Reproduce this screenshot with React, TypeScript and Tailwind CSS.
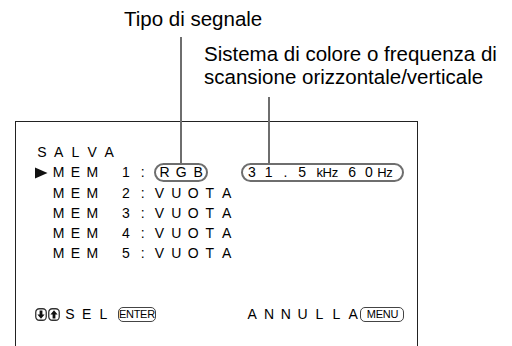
import React from "react";

function Cells({ text }: { text: string }) {
  return (
    <>
      {text.split("").map((c, i) => (
        <span key={i} className="inline-block w-[16.8px] text-center">
          {c === " " ? "\u00a0" : c}
        </span>
      ))}
    </>
  );
}

function KeyBox({ label, className }: { label: string; className?: string }) {
  return (
    <span
      className={`inline-flex items-center justify-center h-[15px] rounded-[5px] border-[1.5px] border-[#444] px-[2px] text-[11px] leading-none tracking-[-0.3px] font-['Liberation_Sans_Narrow','Liberation_Sans',sans-serif] ${className ?? ""}`}
    >
      {label}
    </span>
  );
}

function ArrowKey({ up }: { up?: boolean }) {
  return (
    <svg width="12" height="13" viewBox="0 0 12 13" className="shrink-0">
      <rect x="0.75" y="0.75" width="10.5" height="11.5" rx="3.5" fill="white" stroke="#333" strokeWidth="1.3" />
      <g transform={up ? "" : "rotate(180 6 6.5)"}>
        <path d="M6 2.3 L9.6 6.6 L7.4 6.6 L7.4 10.6 L4.6 10.6 L4.6 6.6 L2.4 6.6 Z" fill="#111" />
      </g>
    </svg>
  );
}

export default function App() {
  return (
    <div className="w-[512px] h-[346px] bg-white text-black overflow-hidden font-['Liberation_Sans',Arial,sans-serif]">
      {/* Callout labels */}
      <div className="pl-[124px] pt-[8px] text-[20.5px] leading-[22px]">Tipo di segnale</div>
      <div className="pl-[204px] pt-[12px] text-[20.5px] leading-[23px]">
        <div>Sistema di colore o frequenza di</div>
        <div>scansione orizzontale/verticale</div>
      </div>

      {/* OSD frame */}
      <div className="ml-[15px] mt-[33px] w-[403px] h-[260px] border-[1.5px] border-b-0 border-[#222] pl-[17.5px] pt-[20px] text-[14px]">
        <div className="flex items-center h-[20px]">
          <Cells text="SALVA" />
        </div>

        <div className="flex items-center h-[21px]">
          <span className="inline-flex w-[16.8px] justify-start">
            <svg width="14" height="12" viewBox="0 0 14 12">
              <path d="M1 0.5 L13.5 6 L1 11.5 Z" fill="#111" />
            </svg>
          </span>
          <Cells text="MEM 1:" />
          <span className="relative inline-flex items-center h-[19px] rounded-full border-2 border-[#6e6e6e] ml-[3px]">
            <span className="absolute bottom-full left-[24px] w-[2px] h-[128px] bg-[#6e6e6e]" />
            <Cells text="RGB" />
          </span>
          <span className="relative inline-flex items-center h-[19px] rounded-full border-2 border-[#6e6e6e] ml-[33px] pr-[5px]">
            <span className="absolute bottom-full left-[25px] w-[2px] h-[68px] bg-[#6e6e6e]" />
            <Cells text="31.5" />
            <span className="inline-block w-[33px] text-center text-[13px] tracking-[-0.3px]">kHz</span>
            <Cells text="60" />
            <span className="inline-block w-[20px] text-[13px] tracking-[-0.3px]">Hz</span>
          </span>
        </div>

        {[2, 3, 4, 5].map((n) => (
          <div key={n} className="flex items-center h-[20px]">
            <Cells text={` MEM ${n}:VUOTA`} />
          </div>
        ))}

        {/* Bottom hints */}
        <div className="flex items-center h-[20px] mt-[41px]">
          <span className="flex gap-[1px] ml-[1px] mr-[2px]">
            <ArrowKey />
            <ArrowKey up />
          </span>
          <Cells text="SEL" />
          <KeyBox label="ENTER" className="ml-[6px] w-[38px]" />
          <span className="ml-[88px] flex items-center">
            <Cells text="ANNULLA" />
          </span>
          <KeyBox label="MENU" className="-ml-[1px] w-[44px]" />
        </div>
      </div>
    </div>
  );
}
